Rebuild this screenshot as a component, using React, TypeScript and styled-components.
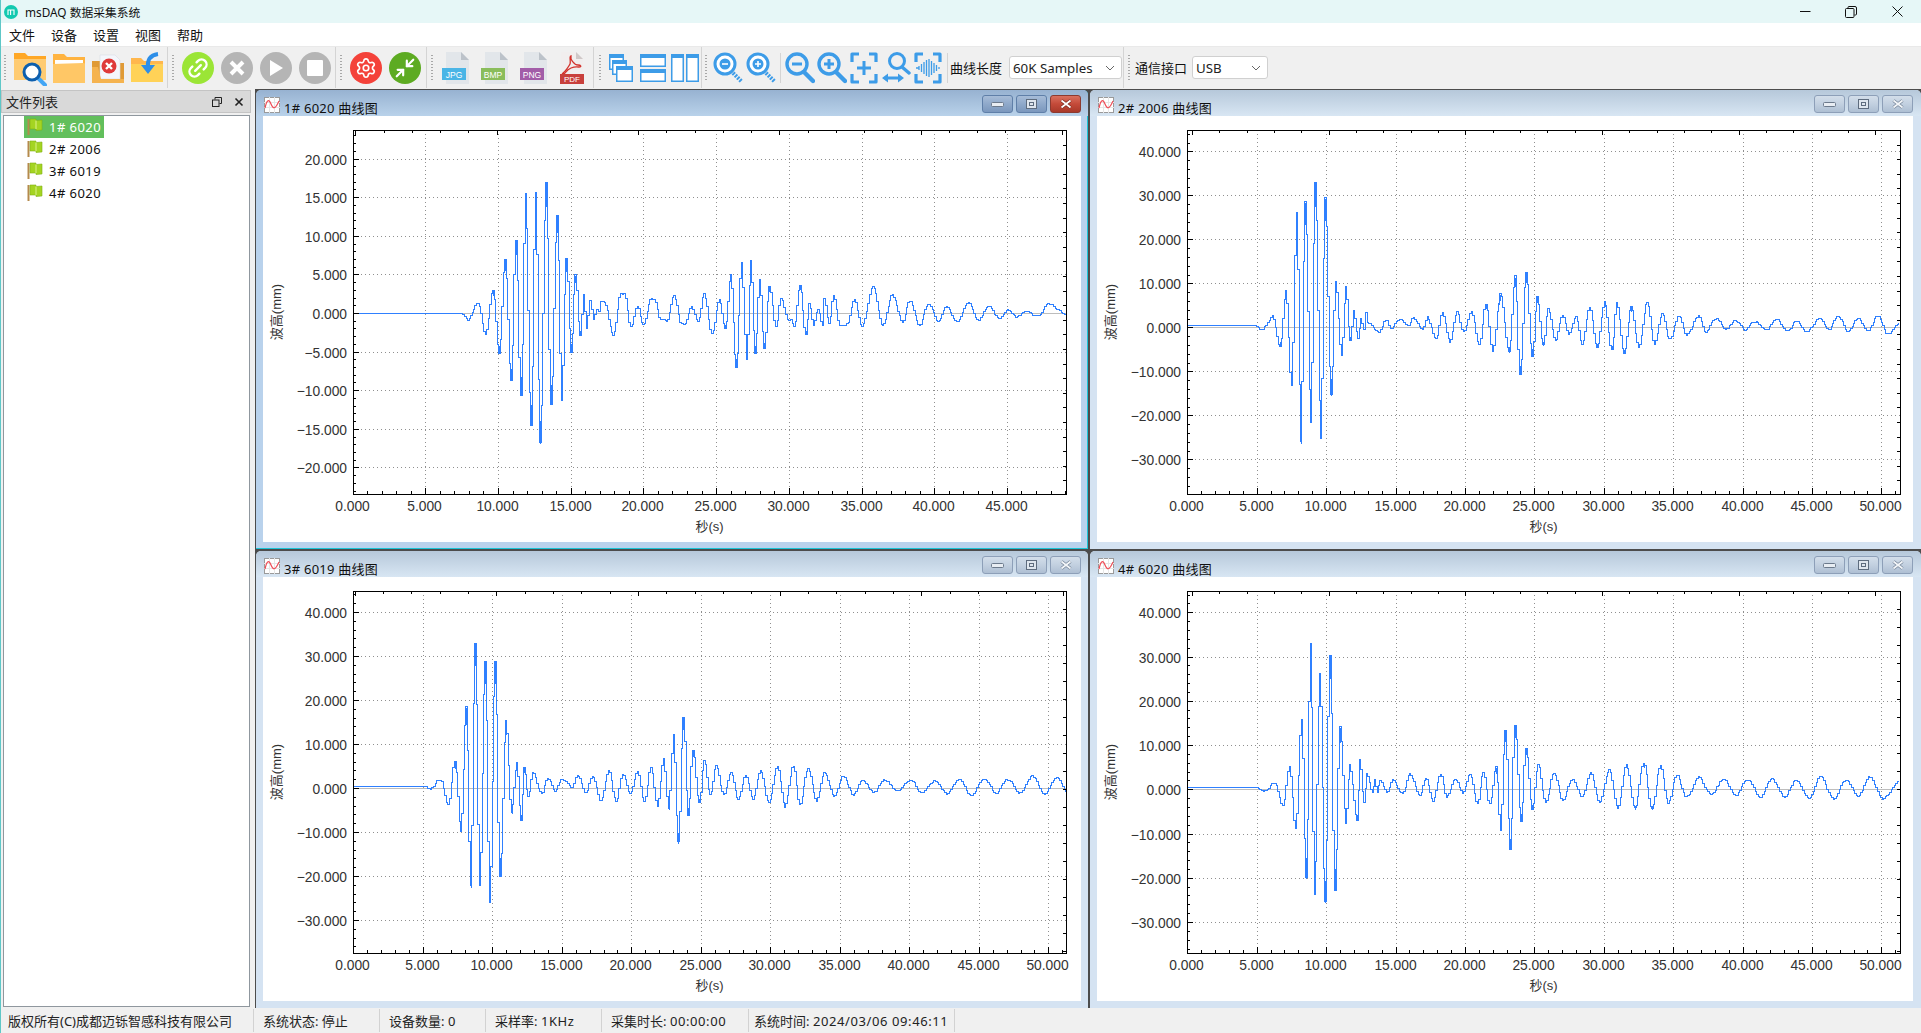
import React from 'react';
import styled, { createGlobalStyle } from 'styled-components';
import { Settings, Minimize2, Link2 } from 'lucide-react';

const UI = `"Noto Sans", "Noto Sans CJK SC", sans-serif`;

const Global = createGlobalStyle`
  html, body { margin: 0; padding: 0; background: #f0f0f0; overflow: hidden; }
  * { box-sizing: border-box; }
`;

const Shell = styled.div`
  width: 1921px; height: 1033px; display: flex; flex-direction: column;
  background: #f0f0f0; font-family: ${UI}; color: #111;
  border-left: 1px solid #5fc7c7;
`;
const TitleBar = styled.header`
  height: 23px; flex: none; display: flex; align-items: center; background: #e6f7f7;
  padding-left: 3px; font-size: 11.8px; color: #111;
`;
const AppName = styled.span` margin-left: 7px; flex: 1; `;
const SysButton = styled.div`
  width: 46px; height: 23px; display: flex; align-items: center; justify-content: center;
`;
const SysButtons = styled.div` display: flex; margin-right: 1px; `;
const MenuBar = styled.nav`
  height: 23px; flex: none; display: flex; align-items: center; background: #fff;
`;
const MenuItem = styled.span` width: 42px; text-align: center; font-size: 13px; `;
const ToolBar = styled.div`
  height: 42px; flex: none; display: flex; background: #f0f0f0; border-top: 1px solid #e9e9e9;
`;
const ToolGroup = styled.div<{ $w: number; $pad?: number; $last?: boolean }>`
  width: ${p => p.$w}px; flex: none; display: flex; align-items: center; padding-left: ${p => p.$pad ?? 4}px;
  border-right: ${p => (p.$last ? 'none' : '1px solid #d4d4d4')};
`;
const Handle = styled.i`
  width: 2px; height: 26px; margin-right: 4px; flex: none;
  background: repeating-linear-gradient(to bottom, #a8a8a8 0 1px, transparent 1px 3px);
`;
const ToolCell = styled.div<{ $w: number }>`
  width: ${p => p.$w}px; flex: none; display: flex; align-items: center; justify-content: center;
`;
const InnerSep = styled.i`
  width: 1px; height: 30px; background: #d4d4d4; margin: 0 3px; flex: none;
`;
const ToolLabel = styled.span<{ $ml: number }>`
  font-size: 13px; margin-left: ${p => p.$ml}px; white-space: nowrap; flex: none;
`;
const Combo = styled.div<{ $w: number; $ml: number }>`
  width: ${p => p.$w}px; margin-left: ${p => p.$ml}px; height: 23px; flex: none;
  display: flex; align-items: center; justify-content: space-between;
  background: #fff; border: 1px solid #d0d0d0; border-radius: 3px;
  padding: 0 6px 0 3px; font-size: 13.3px; color: #222;
`;

const Main = styled.div` flex: 1; display: flex; min-height: 0; `;
const Dock = styled.aside`
  width: 254px; flex: none; display: flex; flex-direction: column; padding: 2px 4px 1px 0;
`;
const DockTitle = styled.div`
  height: 23px; flex: none; display: flex; align-items: center; background: #d9d9d9;
  border: 1px solid #c4c4c4; padding: 0 6px 0 4px; font-size: 13px; gap: 12px; color: #222;
`;
const DockName = styled.span` flex: 1; `;
const Tree = styled.div`
  flex: 1; margin: 2px 1px 0 2px; background: #fff; border: 1px solid #8f979e; padding-left: 20px;
`;
const TreeRow = styled.div<{ $on?: boolean }>`
  width: 80px; height: 22px; display: flex; align-items: center; padding-left: 3px; gap: 6px;
  font-size: 13px; letter-spacing: 0.45px;
  background: ${p => (p.$on ? '#62bf5c' : 'transparent')};
  color: ${p => (p.$on ? '#fff' : '#111')};
`;
const Mdi = styled.main`
  flex: 1; margin-top: 1px; padding: 1px 0 1px 1px; background: #4c4c4c;
  display: grid; grid-template-columns: 832px 831px; grid-template-rows: 459px 457px; gap: 2px;
`;
const Win = styled.section<{ $active?: boolean }>`
  display: flex; flex-direction: column; border-radius: 5px 5px 0 0; overflow: hidden;
  background: ${p => (p.$active ? '#b9d2ec' : '#d5e3f2')};
  ${p => (p.$active ? 'box-shadow: inset -1px -1px 0 #1cc4d6;' : '')}
`;
const WinTitle = styled.div<{ $active?: boolean; $right: number }>`
  height: 26px; flex: none; display: flex; align-items: flex-start; padding: 5px ${p => p.$right}px 0 8px;
  background: linear-gradient(to bottom, ${p => (p.$active ? '#97b2d1, #b9d2ea' : '#b6c8da, #d8e6f3')});
`;
const IconSlot = styled.span` display: flex; margin-top: 2px; `;
const WinName = styled.span`
  flex: 1; font-size: 13px; line-height: 16px; margin: 5px 0 0 4px; letter-spacing: 0.25px; color: #111;
`;
const WinBtns = styled.div` display: flex; gap: 3px; `;
const WinBtn = styled.div<{ $kind: 'plain' | 'on' | 'close' }>`
  width: 31px; height: 18px; display: flex; align-items: center; justify-content: center;
  border-radius: 3px; border: 1px solid ${p => (p.$kind === 'plain' ? '#8d9fb8' : p.$kind === 'on' ? '#5f7fa8' : '#8c3a30')};
  background: linear-gradient(to bottom, ${p =>
    p.$kind === 'plain' ? '#d3deea, #c2d0e0 50%, #aebfd3' : p.$kind === 'on' ? '#a7bdd8, #8fa9ca 50%, #7b97bd' : '#d9705f, #c44a39 50%, #a8392a'});
`;
const Client = styled.div<{ $right: number }>`
  flex: 1; margin: 0 ${p => p.$right}px 7px 7px; background: #fff; min-height: 0;
`;
const StatusBar = styled.footer`
  height: 25px; flex: none; display: flex; align-items: center; background: #f0f0f0; font-size: 13px; color: #222;
`;
const StatusCell = styled.div<{ $w: number; $pad?: number }>`
  width: ${p => p.$w}px; flex: none; height: 23px; display: flex; align-items: center; padding-left: ${p => p.$pad ?? 9}px;
  border-right: 1px solid #d2d2d2; white-space: pre;
`;
const StatusValue = styled.span` letter-spacing: 0.6px; `;

const TickText = styled.text`
  font-family: "Liberation Sans", Arial, sans-serif; font-size: 13.8px; fill: #333;
`;
const AxisText = styled.text`
  font-family: "Liberation Sans", "Noto Sans CJK SC", sans-serif; font-size: 13px; fill: #333;
`;

/* ---------- waveforms ---------- */
type P = [number, number];
const map = (raw: P[], ox: number, oy: number, k: number): P[] => raw.map(([x, y]) => [ox + x * k, oy + y * k]);

const w1: P[] = [
  ...map([[-262, 429], [62, 430], [82, 448], [112, 398], [135, 490], [157, 358], [175, 548], [193, 268], [210, 630], [225, 210], [240, 672], [254, 70], [270, 765], [285, 62], [298, 818], [315, 36], [330, 700], [348, 132], [363, 690], [376, 265], [391, 542], [403, 314], [418, 495], [428, 370], [437, 475], [447, 393], [458, 450], [468, 415], [474, 420], [480, 394], [492, 394], [517, 493], [540, 370], [550, 372], [570, 472], [590, 408], [607, 464], [632, 384], [640, 388], [660, 448], [678, 455], [700, 376], [722, 460], [730, 460], [752, 408], [772, 452], [790, 370], [813, 488], [836, 385], [852, 475], [870, 310], [886, 592], [902, 280], [917, 568], [930, 270], [943, 548], [956, 328], [970, 535], [985, 346], [1005, 465], [1020, 385], [1040, 448], [1050, 450], [1060, 472], [1078, 342], [1094, 492], [1105, 397], [1118, 465], [1132, 415], [1145, 460], [1150, 382], [1165, 460], [1178, 370], [1197, 465]], 440, 170, 1 / 3),
  ...map([[691, 265], [697, 244], [703, 266], [712, 234], [720, 265], [728, 241], [736, 262], [742, 245], [750, 264], [757, 247], [765, 262], [772, 250], [780, 262], [790, 247], [798, 262], [806, 250], [815, 260], [822, 252], [830, 258], [838, 253], [846, 258], [855, 248], [871, 256]], 0, 0, 1.225),
];
const w2: P[] = [
  ...map([[262, 586], [468, 586], [482, 598], [515, 558], [537, 647], [555, 480], [572, 765], [587, 243], [600, 938], [613, 216], [630, 875], [643, 155], [660, 925], [673, 203], [690, 795], [705, 453], [722, 675], [735, 470], [747, 630], [758, 543], [772, 620], [780, 565], [788, 600], [794, 545], [800, 575], [835, 605], [855, 568], [870, 590], [900, 565], [920, 585], [938, 562], [965, 595], [980, 560], [1005, 625], [1025, 545], [1047, 635], [1068, 543], [1088, 608], [1112, 540], [1135, 638], [1155, 520], [1175, 660], [1195, 522]], 1100, 130, 1 / 3),
  ...map([[1224, 240], [1231, 287], [1236, 226], [1240, 305], [1245, 222], [1250, 290], [1254, 242], [1259, 282], [1263, 252], [1269, 278], [1275, 256], [1280, 272], [1286, 258], [1291, 280], [1297, 250], [1303, 283], [1309, 246], [1315, 285], [1319, 246], [1325, 288], [1331, 250], [1337, 283], [1344, 247], [1350, 280], [1356, 255], [1362, 278], [1370, 258], [1376, 272], [1386, 258], [1392, 270], [1400, 259], [1408, 268], [1416, 262], [1424, 268], [1432, 262], [1440, 268], [1450, 261], [1458, 270], [1466, 262], [1474, 269], [1484, 260], [1492, 268], [1500, 258], [1508, 270], [1516, 260], [1524, 270], [1532, 258], [1540, 272], [1551, 262]], 0, 0, 1.225),
];
const w3: P[] = [
  ...map([[280, 587], [490, 587], [505, 596], [538, 567], [562, 640], [582, 514], [600, 722], [616, 352], [630, 890], [643, 158], [657, 883], [673, 213], [687, 935], [703, 213], [717, 858], [735, 388], [752, 668], [768, 517], [780, 688], [790, 530], [802, 622], [815, 545], [842, 610], [860, 563], [882, 598], [905, 565], [935, 590], [950, 552], [975, 605], [995, 555], [1020, 632], [1043, 538], [1065, 632], [1085, 552], [1107, 607], [1130, 540], [1150, 630], [1170, 532], [1190, 643]], 260, 590, 1 / 3),
  ...map([[541, 620], [545, 660], [549, 600], [553, 688], [557, 585], [561, 665], [565, 612], [570, 655], [574, 620], [579, 650], [584, 625], [590, 648], [596, 630], [602, 652], [608, 632], [614, 652], [620, 628], [627, 655], [634, 625], [640, 658], [647, 625], [652, 657], [659, 628], [666, 653], [672, 630], [680, 650], [688, 633], [696, 648], [704, 636], [712, 646], [722, 636], [732, 646], [742, 636], [752, 647], [762, 637], [772, 648], [782, 636], [792, 648], [802, 635], [812, 647], [822, 636], [832, 647], [842, 634], [852, 648], [862, 635], [871, 645]], 0, 0, 1.225),
];
const w4: P[] = [
  ...map([[262, 590], [468, 590], [488, 602], [522, 577], [546, 643], [566, 528], [585, 715], [602, 390], [615, 865], [629, 160], [641, 910], [657, 250], [673, 935], [687, 195], [702, 898], [717, 410], [735, 700], [747, 525], [768, 688], [777, 505], [790, 640], [798, 548], [815, 605], [822, 570], [830, 605], [838, 570], [857, 605], [875, 568], [905, 608], [927, 550], [957, 612], [975, 562], [997, 630], [1020, 547], [1037, 620], [1062, 568], [1085, 605], [1107, 548], [1130, 638], [1147, 545], [1167, 640], [1185, 532], [1200, 720]], 1100, 590, 1 / 3),
  ...map([[1228, 596], [1232, 693], [1236, 592], [1241, 670], [1245, 610], [1250, 660], [1255, 625], [1261, 655], [1268, 630], [1275, 652], [1283, 635], [1291, 650], [1298, 630], [1305, 655], [1313, 628], [1320, 660], [1327, 624], [1334, 660], [1341, 622], [1348, 660], [1355, 625], [1361, 655], [1368, 632], [1376, 650], [1386, 634], [1396, 648], [1406, 636], [1416, 648], [1426, 636], [1436, 650], [1446, 636], [1456, 650], [1466, 636], [1476, 650], [1486, 634], [1496, 652], [1506, 636], [1516, 650], [1526, 634], [1536, 652], [1551, 636]], 0, 0, 1.225),
];

function tracePath(pts: P[], ox: number, oy: number): string {
  let seed = 11;
  const rnd = () => { seed = (seed * 16807) % 2147483647; return seed / 2147483647 - 0.5; };
  let d = '';
  let wob = 0;
  let thick = '';
  for (let i = 0; i < pts.length - 1; i++) {
    const [x0, y0] = pts[i];
    const [x1, y1] = pts[i + 1];
    const flat = Math.abs(y1 - y0) < 1;
    const n = Math.max(1, Math.round((x1 - x0) / 1.5));
    for (let s = 0; s < n; s++) {
      const t = s / n;
      wob = 0.72 * wob + rnd() * 1.9;
      const y = y0 + ((y1 - y0) * (1 - Math.cos(Math.PI * t))) / 2 + (flat ? rnd() * 0.3 : wob);
      const x = Math.round(x0 + (x1 - x0) * t - ox) + 0.5;
      const yy = Math.round(y - oy) + 0.5;
      d += d ? `H${x}V${yy}` : `M${x} ${yy}`;
    }
    if (i > 0) {
      const prev = pts[i - 1];
      const swing = Math.max(Math.abs(y0 - prev[1]), Math.abs(y1 - y0));
      if (swing > 45) {
        const dir = y1 > y0 ? 1 : -1;
        const x = Math.round(x0 - ox) + 1.5;
        const ya = Math.round(y0 - oy) + 0.5;
        thick += `M${x} ${ya}V${Math.round(ya + dir * swing * 0.09) + 0.5}`;
      }
    }
  }
  return d + thick;
}

/* ---------- chart ---------- */
interface ChartCfg {
  id: string; cx: number; cy: number; L: number; T: number; R: number; B: number;
  x0: number; xs: number; xMax: number; zero: number; perStep: number; yStep: number; yTop: number; yBot: number;
  topFirst: number; topStep: number; rightStep: number; data: P[]; w: number; h: number;
}
const fmt = (v: number) => (v < 0 ? '\u2212' : '') + Math.abs(v).toFixed(3);

function Chart({ c }: { c: ChartCfg }) {
  const L = c.L - c.cx, R = c.R - c.cx, T = c.T - c.cy, B = c.B - c.cy;
  const xAt = (v: number) => Math.round(c.x0 - c.cx + v * c.xs) + 0.5;
  const yAt = (v: number) => Math.round(c.zero - c.cy - (v / c.yStep) * c.perStep) + 0.5;
  const xl: number[] = [];
  for (let v = 0; v <= c.xMax; v += 5) xl.push(v);
  const yl: number[] = [];
  for (let v = c.yTop; v >= c.yBot; v -= c.yStep) yl.push(v);
  const ticks: string[] = [];
  for (let v = 0; c.x0 + v * c.xs < c.R; v += 1) {
    const x = xAt(v);
    ticks.push(`M${x} ${B}v${v % 5 === 0 ? -6 : -3}`);
  }
  const sub = c.yStep / 5;
  for (let i = -60; i <= 60; i++) {
    const y = yAt(i * sub);
    if (y <= T || y >= B) continue;
    ticks.push(`M${L} ${y}h${i % 5 === 0 ? 6 : 3}`);
  }
  for (let i = 0; ; i++) {
    const x = Math.round(L + c.topFirst - c.topStep + (i * c.topStep) / 5) + 0.5;
    if (x >= R) break;
    ticks.push(`M${x} ${T}v${i % 5 === 0 ? 5 : 3}`);
  }
  for (let y = T + c.rightStep; y < B; y += c.rightStep) ticks.push(`M${R} ${Math.round(y) + 0.5}h-3`);
  const midX = (L + R) / 2;
  const midY = (T + B) / 2;
  return (
    <svg width={c.w} height={c.h} style={{ display: 'block' }}>
      <defs>
        <clipPath id={c.id}><rect x={L} y={T} width={R - L} height={B - T} /></clipPath>
      </defs>
      <g stroke="#8f8f8f" strokeDasharray="1 3" shapeRendering="crispEdges" fill="none">
        {xl.filter(v => v > 0).map(v => <line key={v} x1={xAt(v)} x2={xAt(v)} y1={T} y2={B} />)}
        {yl.filter(v => v !== 0).map(v => <line key={v} x1={L} x2={R} y1={yAt(v)} y2={yAt(v)} />)}
      </g>
      <line x1={L} x2={R} y1={yAt(0)} y2={yAt(0)} stroke="#bdbdbd" shapeRendering="crispEdges" />
      <path d={tracePath(c.data, c.cx, c.cy)} clipPath={`url(#${c.id})`} fill="none" stroke="#2f80ff" strokeWidth={1} shapeRendering="crispEdges" />
      <rect x={L + 0.5} y={T + 0.5} width={R - L} height={B - T} fill="none" stroke="#000" shapeRendering="crispEdges" />
      <path d={ticks.join('')} stroke="#000" fill="none" shapeRendering="crispEdges" />
      {yl.map(v => <TickText key={v} x={L - 6} y={yAt(v) + 5} textAnchor="end">{fmt(v)}</TickText>)}
      {xl.map(v => <TickText key={v} x={xAt(v) - 1} y={B + 17} textAnchor="middle">{v.toFixed(3)}</TickText>)}
      <AxisText x={midX} y={B + 37} textAnchor="middle">秒(s)</AxisText>
      <AxisText x={0} y={0} textAnchor="middle" transform={`translate(${L - 72} ${midY}) rotate(-90)`}>波高(mm)</AxisText>
    </svg>
  );
}

const charts: { name: string; active?: boolean; right: number; c: ChartCfg }[] = [
  { name: '1# 6020 曲线图', active: true, right: 7, c: { id: 'p1', cx: 263, cy: 116, w: 818, h: 426, L: 353, T: 130, R: 1066, B: 494, x0: 352.6, xs: 14.54, xMax: 45, zero: 313, perStep: 38.6, yStep: 5, yTop: 20, yBot: -20, topFirst: 143.7, topStep: 141.3, rightStep: 14.6, data: w1 } },
  { name: '2# 2006 曲线图', right: 8, c: { id: 'p2', cx: 1097, cy: 116, w: 816, h: 426, L: 1187, T: 130, R: 1900, B: 494, x0: 1187.3, xs: 13.88, xMax: 50, zero: 327.3, perStep: 44, yStep: 10, yTop: 40, yBot: -30, topFirst: 141.7, topStep: 136.7, rightStep: 14.6, data: w2 } },
  { name: '3# 6019 曲线图', right: 7, c: { id: 'p3', cx: 263, cy: 577, w: 818, h: 424, L: 353, T: 591, R: 1066, B: 953, x0: 353.3, xs: 13.9, xMax: 50, zero: 788, perStep: 44, yStep: 10, yTop: 40, yBot: -30, topFirst: 143.3, topStep: 141.7, rightStep: 18, data: w3 } },
  { name: '4# 6020 曲线图', right: 8, c: { id: 'p4', cx: 1097, cy: 577, w: 816, h: 424, L: 1187, T: 591, R: 1900, B: 953, x0: 1187.3, xs: 13.88, xMax: 50, zero: 789.3, perStep: 44.25, yStep: 10, yTop: 40, yBot: -30, topFirst: 141.7, topStep: 136.7, rightStep: 18, data: w4 } },
];

/* ---------- icons ---------- */
const Logo = () => (
  <svg width="14" height="14" viewBox="0 0 14 14"><circle cx="7" cy="7" r="7" fill="#12c9b0" /><path d="M4 10V5h2.6v5M6.6 5H10v5" fill="none" stroke="#fff" strokeWidth="1.1" /></svg>
);
const CurveIcon = () => (
  <svg width="16" height="16" viewBox="0 0 16 16">
    <rect x=".5" y=".5" width="15" height="15" fill="#fff" stroke="#9a9a9a" />
    <path d="M0 5.5h16M0 10.5h16M5.5 0v16M10.5 0v16" stroke="#e6e6e6" />
    <path d="M1 11C3 2 5 2 7 7s4 6 8-3" fill="none" stroke="#ef4d57" strokeWidth="1.2" />
  </svg>
);
const Flag = () => (
  <svg width="16" height="18" viewBox="0 0 16 18">
    <path d="M1.5 1v16" stroke="#b58a4c" strokeWidth="2" />
    <path d="M3 1h6v1.5l6-.5v10l-6 .5V11H3z" fill="#a4d422" stroke="#7fb015" strokeWidth=".6" />
    <path d="M9 2.5v8.5" stroke="#dcf28a" />
  </svg>
);
const FolderSearch = () => (
  <svg width="34" height="36" viewBox="0 0 34 36">
    <path d="M1 3h11l3 3h18v24H1z" fill="#ffa726" />
    <path d="M1 9h32v21H1z" fill="#ffcb72" />
    <path d="M25 28l7 7" stroke="#42a5f5" strokeWidth="4" strokeLinecap="round" />
    <circle cx="19" cy="22" r="8" fill="#fff" stroke="#0d5fae" strokeWidth="3" />
  </svg>
);
const FolderPlain = () => (
  <svg width="34" height="34" viewBox="0 0 34 34">
    <path d="M1 3h11l3 3h18v26H1z" fill="#ffb340" />
    <path d="M3 9h28v6H3z" fill="#fff" />
    <path d="M1 13l30-1 2 .5V32H1z" fill="#ffc766" />
  </svg>
);
const FolderError = () => (
  <svg width="34" height="34" viewBox="0 0 34 34">
    <path d="M1 10h9l2 2h21v20H1z" fill="#e09a35" />
    <path d="M9 4h15l5 5v19H9z" fill="#f4f6fb" stroke="#d9dde6" strokeWidth=".6" />
    <path d="M1 16h6l3 12h23v4H1z" fill="#f5b34f" />
    <circle cx="18" cy="15" r="7.5" fill="#df3a3a" />
    <path d="M15 12l6 6M21 12l-6 6" stroke="#fff" strokeWidth="2.4" />
  </svg>
);
const FolderArrow = () => (
  <svg width="34" height="34" viewBox="0 0 34 34">
    <path d="M1 7h10l3 3h19v21H1z" fill="#ffb74d" />
    <path d="M1 13h32v18H1z" fill="#ffd257" />
    <path d="M28 3C20 4 17 9 18 17" fill="none" stroke="#2d8ee8" strokeWidth="4" />
    <path d="M11 14h14l-7 9z" fill="#2d8ee8" />
  </svg>
);
const Circle = styled.div<{ $bg: string }>`
  width: 32px; height: 32px; border-radius: 50%; background: ${p => p.$bg};
  display: flex; align-items: center; justify-content: center; color: #fff;
`;
const FileIcon = ({ label, color }: { label: string; color: string }) => (
  <svg width="30" height="34" viewBox="0 0 30 34">
    <path d="M4 1h15l8 8v24H4z" fill="#e2e6ea" />
    <path d="M19 1l8 8h-8z" fill="#bcc2c9" />
    <rect x="0" y="17" width="24" height="12" fill={color} />
    <text x="12" y="26.5" textAnchor="middle" fontFamily="Liberation Sans" fontSize="8.5" fill="#fff">{label}</text>
  </svg>
);
const PdfIcon = () => (
  <svg width="30" height="34" viewBox="0 0 30 34">
    <path d="M2 1h15l7 7v25H2z" fill="#f1eeee" />
    <path d="M17 1l7 7h-7z" fill="#cfc8c8" />
    <path d="M12 5c-2 0 0 6-1 8s-5 8-7 9 1 2 3-1 7-6 13-5c3 0 2-2-1-2-4 0-8-6-7-9z" fill="none" stroke="#d3322c" strokeWidth="1.3" />
    <rect x="1" y="23" width="24" height="10" fill="#c8403c" />
    <text x="13" y="31" textAnchor="middle" fontFamily="Liberation Sans" fontSize="8" fill="#fff">PDF</text>
  </svg>
);
const B = '#3d9ce8';
const MiniWin = ({ x, y, w, h }: { x: number; y: number; w: number; h: number }) => (
  <g>
    <rect x={x + 0.75} y={y + 0.75} width={w - 1.5} height={h - 1.5} fill="#fff" stroke={B} strokeWidth="1.5" />
    <rect x={x} y={y} width={w} height="4" fill={B} />
  </g>
);
const WinCascade = () => <svg width="26" height="30" viewBox="0 0 26 30"><MiniWin x={1} y={1} w={15} h={16} /><MiniWin x={4} y={7} w={15} h={15} /><MiniWin x={8} y={13} w={17} h={16} /></svg>;
const WinRows = () => <svg width="26" height="30" viewBox="0 0 26 30"><MiniWin x={0} y={1} w={26} h={13} /><MiniWin x={0} y={16} w={26} h={13} /></svg>;
const WinCols = () => <svg width="28" height="30" viewBox="0 0 28 30"><MiniWin x={0} y={1} w={13} h={28} /><MiniWin x={15} y={1} w={13} h={28} /></svg>;
const GlassDash = ({ plus }: { plus?: boolean }) => (
  <svg width="30" height="32" viewBox="0 0 30 32">
    <circle cx="12" cy="12" r="10" fill="#fff" stroke={B} strokeWidth="3" />
    <circle cx="12" cy="12" r="5.5" fill={B} />
    <path d={plus ? 'M9 12h6M12 9v6' : 'M9 12h6'} stroke="#fff" strokeWidth="1.6" />
    <path d="M20 21l9 9" stroke={B} strokeWidth="4" strokeDasharray="2 1.2" />
  </svg>
);
const GlassBold = ({ plus }: { plus?: boolean }) => (
  <svg width="30" height="32" viewBox="0 0 30 32">
    <circle cx="12" cy="12" r="10" fill="none" stroke={B} strokeWidth="3.4" />
    <path d={plus ? 'M7 12h10M12 7v10' : 'M7 12h10'} stroke={B} strokeWidth="3" />
    <path d="M19 20l9 9" stroke={B} strokeWidth="4.4" strokeLinecap="round" />
  </svg>
);
const Corners = () => <path d="M9 2H2v8M19 2h7v8M9 30H2v-8M19 30h7v-8" fill="none" stroke={B} strokeWidth="3.2" strokeLinejoin="round" />;
const FrameFocus = () => <svg width="28" height="32" viewBox="0 0 28 32"><Corners /><path d="M7 16h14M14 9v14" stroke={B} strokeWidth="3" /></svg>;
const GlassArrow = () => (
  <svg width="30" height="34" viewBox="0 0 30 34">
    <circle cx="16" cy="10" r="7.5" fill="none" stroke={B} strokeWidth="3" />
    <path d="M21 16l7 6" stroke={B} strokeWidth="3.4" strokeLinecap="round" />
    <path d="M1 27l6-4.5v3h10v-3l6 4.5-6 4.5v-3H7v3z" fill={B} />
  </svg>
);
const FrameWave = () => (
  <svg width="28" height="32" viewBox="0 0 28 32"><Corners />
    <path d="M2 16h3M5 14v4M7.5 12v8M10 10v12M12.5 8v16M15 7v18M17.5 9v14M20 11v10M22.5 13v6M25 15v2" stroke={B} strokeWidth="1.3" />
  </svg>
);
const Chevron = () => <svg width="10" height="6" viewBox="0 0 10 6"><path d="M1 1l4 4 4-4" fill="none" stroke="#666" /></svg>;

const CloseGlyph = ({ active }: { active?: boolean }) => (
  <svg width="14" height="10">
    <path d="M2.5 1.5l9 7M11.5 1.5l-9 7" stroke={active ? '#7a2a20' : '#77869a'} strokeWidth="3.4" />
    <path d="M2.5 1.5l9 7M11.5 1.5l-9 7" stroke={active ? '#fff' : '#f2f5f8'} strokeWidth="1.8" />
  </svg>
);

export default function App() {
  return (
    <Shell>
      <Global />
      <TitleBar>
        <Logo />
        <AppName>msDAQ 数据采集系统</AppName>
        <SysButtons>
          <SysButton><svg width="11" height="11"><path d="M0 5.5h10.5" stroke="#111" /></svg></SysButton>
          <SysButton><svg width="12" height="12"><path d="M3 2.5V1.5q0-1 1-1h6q1.5 0 1.5 1.5v6q0 1-1 1h-1" fill="none" stroke="#111" /><rect x=".5" y="2.5" width="8.5" height="9" rx="1" fill="none" stroke="#111" /></svg></SysButton>
          <SysButton><svg width="11" height="11"><path d="M.5.5l10 10M10.5.5l-10 10" stroke="#111" /></svg></SysButton>
        </SysButtons>
      </TitleBar>
      <MenuBar>
        {['文件', '设备', '设置', '视图', '帮助'].map(m => <MenuItem key={m}>{m}</MenuItem>)}
      </MenuBar>
      <ToolBar>
        <ToolGroup $w={167} $pad={3}>
          <Handle />
          <ToolCell $w={39}><FolderSearch /></ToolCell>
          <ToolCell $w={39}><FolderPlain /></ToolCell>
          <ToolCell $w={39}><FolderError /></ToolCell>
          <ToolCell $w={39}><FolderArrow /></ToolCell>
        </ToolGroup>
        <ToolGroup $w={168}>
          <Handle />
          <ToolCell $w={39}><Circle $bg="#9be536"><Link2 size={24} strokeWidth={2.4} style={{ transform: 'rotate(-45deg)' }} /></Circle></ToolCell>
          <ToolCell $w={39}><Circle $bg="#b5b5b5"><svg width="18" height="18"><path d="M3 3l12 12M15 3L3 15" stroke="#fff" strokeWidth="4" /></svg></Circle></ToolCell>
          <ToolCell $w={39}><Circle $bg="#b5b5b5"><svg width="16" height="18"><path d="M2 1l13 8-13 8z" fill="#fff" /></svg></Circle></ToolCell>
          <ToolCell $w={39}><Circle $bg="#b5b5b5"><svg width="16" height="16"><rect width="16" height="16" rx="1" fill="#fff" /></svg></Circle></ToolCell>
        </ToolGroup>
        <ToolGroup $w={91}>
          <Handle />
          <ToolCell $w={39}><Circle $bg="#f4423a"><Settings size={22} strokeWidth={1.8} /></Circle></ToolCell>
          <ToolCell $w={39}><Circle $bg="#5dab22"><Minimize2 size={22} strokeWidth={2.4} /></Circle></ToolCell>
        </ToolGroup>
        <ToolGroup $w={167}>
          <Handle />
          <ToolCell $w={39}><FileIcon label="JPG" color="#4ab5e6" /></ToolCell>
          <ToolCell $w={39}><FileIcon label="BMP" color="#8abd5c" /></ToolCell>
          <ToolCell $w={39}><FileIcon label="PNG" color="#a25da8" /></ToolCell>
          <ToolCell $w={39}><PdfIcon /></ToolCell>
        </ToolGroup>
        <ToolGroup $w={108} $pad={5}>
          <Handle />
          <ToolCell $w={32}><WinCascade /></ToolCell>
          <ToolCell $w={32}><WinRows /></ToolCell>
          <ToolCell $w={32}><WinCols /></ToolCell>
        </ToolGroup>
        <ToolGroup $w={422} $pad={3}>
          <Handle />
          <ToolCell $w={33}><GlassDash /></ToolCell>
          <ToolCell $w={33}><GlassDash plus /></ToolCell>
          <InnerSep />
          <ToolCell $w={32}><GlassBold /></ToolCell>
          <ToolCell $w={32}><GlassBold plus /></ToolCell>
          <ToolCell $w={32}><FrameFocus /></ToolCell>
          <ToolCell $w={32}><GlassArrow /></ToolCell>
          <ToolCell $w={32}><FrameWave /></ToolCell>
          <InnerSep />
          <ToolLabel $ml={-1}>曲线长度</ToolLabel>
          <Combo $w={113} $ml={7}>60K Samples<Chevron /></Combo>
        </ToolGroup>
        <ToolGroup $w={150} $last>
          <Handle />
          <ToolLabel $ml={1}>通信接口</ToolLabel>
          <Combo $w={76} $ml={5}>USB<Chevron /></Combo>
        </ToolGroup>
      </ToolBar>
      <Main>
        <Dock>
          <DockTitle>
            <DockName>文件列表</DockName>
            <svg width="10" height="10"><path d="M3 2.5V.5h6.5v6H7.5" fill="none" stroke="#222" /><rect x=".5" y="3" width="6.5" height="6.5" fill="none" stroke="#222" /></svg>
            <svg width="10" height="10"><path d="M1.5 1.5l7 7M8.5 1.5l-7 7" stroke="#222" strokeWidth="1.6" /></svg>
          </DockTitle>
          <Tree>
            {['1# 6020', '2# 2006', '3# 6019', '4# 6020'].map((t, i) => (
              <TreeRow key={i} $on={i === 0}><Flag />{t}</TreeRow>
            ))}
          </Tree>
        </Dock>
        <Mdi>
          {charts.map(({ name, active, right, c }) => (
            <Win key={c.id} $active={active}>
              <WinTitle $active={active} $right={right}>
                <IconSlot><CurveIcon /></IconSlot>
                <WinName>{name}</WinName>
                <WinBtns>
                  <WinBtn $kind={active ? 'on' : 'plain'}><svg width="14" height="8"><rect x=".5" y="2.5" width="12" height="4" rx="1" fill="#e8edf3" stroke="#6c7a8c" /></svg></WinBtn>
                  <WinBtn $kind={active ? 'on' : 'plain'}><svg width="12" height="11"><rect x=".5" y=".5" width="10" height="9" fill="#dfe6ee" stroke="#5e6c7e" /><rect x="3.5" y="3.5" width="4" height="3" fill="none" stroke="#5e6c7e" /></svg></WinBtn>
                  <WinBtn $kind={active ? 'close' : 'plain'}><CloseGlyph active={active} /></WinBtn>
                </WinBtns>
              </WinTitle>
              <Client $right={right}><Chart c={c} /></Client>
            </Win>
          ))}
        </Mdi>
      </Main>
      <StatusBar>
        <StatusCell $w={253} $pad={7}>版权所有(C)成都迈铄智感科技有限公司</StatusCell>
        <StatusCell $w={126}>系统状态: 停止</StatusCell>
        <StatusCell $w={106}>设备数量: <StatusValue>0</StatusValue></StatusCell>
        <StatusCell $w={116}>采样率: <StatusValue>1KHz</StatusValue></StatusCell>
        <StatusCell $w={147}>采集时长: <StatusValue>00:00:00</StatusValue></StatusCell>
        <StatusCell $w={206} $pad={5}>系统时间: <StatusValue>2024/03/06 09:46:11</StatusValue></StatusCell>
      </StatusBar>
    </Shell>
  );
}
